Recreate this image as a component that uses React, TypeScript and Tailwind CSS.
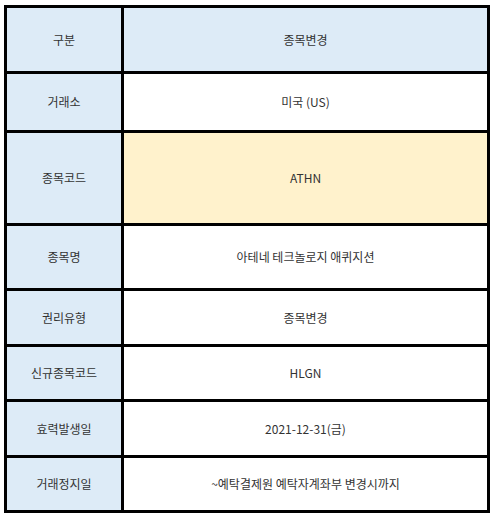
const rows: { label: string; value: string; h: string; bg: string }[] = [
  { label: '구분', value: '종목변경', h: 'h-[63px]', bg: 'bg-[#ddebf7]' },
  { label: '거래소', value: '미국 (US)', h: 'h-[56px]', bg: 'bg-white' },
  { label: '종목코드', value: 'ATHN', h: 'h-[90px]', bg: 'bg-[#fff2cc]' },
  { label: '종목명', value: '아테네 테크놀로지 애퀴지션', h: 'h-[62px]', bg: 'bg-white' },
  { label: '권리유형', value: '종목변경', h: 'h-[53px]', bg: 'bg-white' },
  { label: '신규종목코드', value: 'HLGN', h: 'h-[52px]', bg: 'bg-white' },
  { label: '효력발생일', value: '2021-12-31(금)', h: 'h-[53px]', bg: 'bg-white' },
  { label: '거래정지일', value: '~예탁결제원 예탁자계좌부 변경시까지', h: 'h-[52px]', bg: 'bg-white' },
]

export default function App() {
  return (
    <div
      className="min-h-screen bg-white pl-[4px] pt-[5px]"
      style={{ fontFamily: '"Noto Sans CJK KR", "Noto Sans", sans-serif' }}
    >
      <div className="w-[486px] border-[3px] border-black text-[12px] text-[#333]">
        {rows.map((r, i) => (
          <div
            key={r.label}
            className={`flex ${i < rows.length - 1 ? 'border-b-[3px] border-black' : ''}`}
          >
            <div className={`w-[117px] shrink-0 border-r-[3px] border-black bg-[#ddebf7] flex items-center justify-center ${r.h}`}>
              {r.label}
            </div>
            <div className={`flex-1 flex items-center justify-center ${r.bg} ${r.h}`}>
              {r.value}
            </div>
          </div>
        ))}
      </div>
    </div>
  )
}
